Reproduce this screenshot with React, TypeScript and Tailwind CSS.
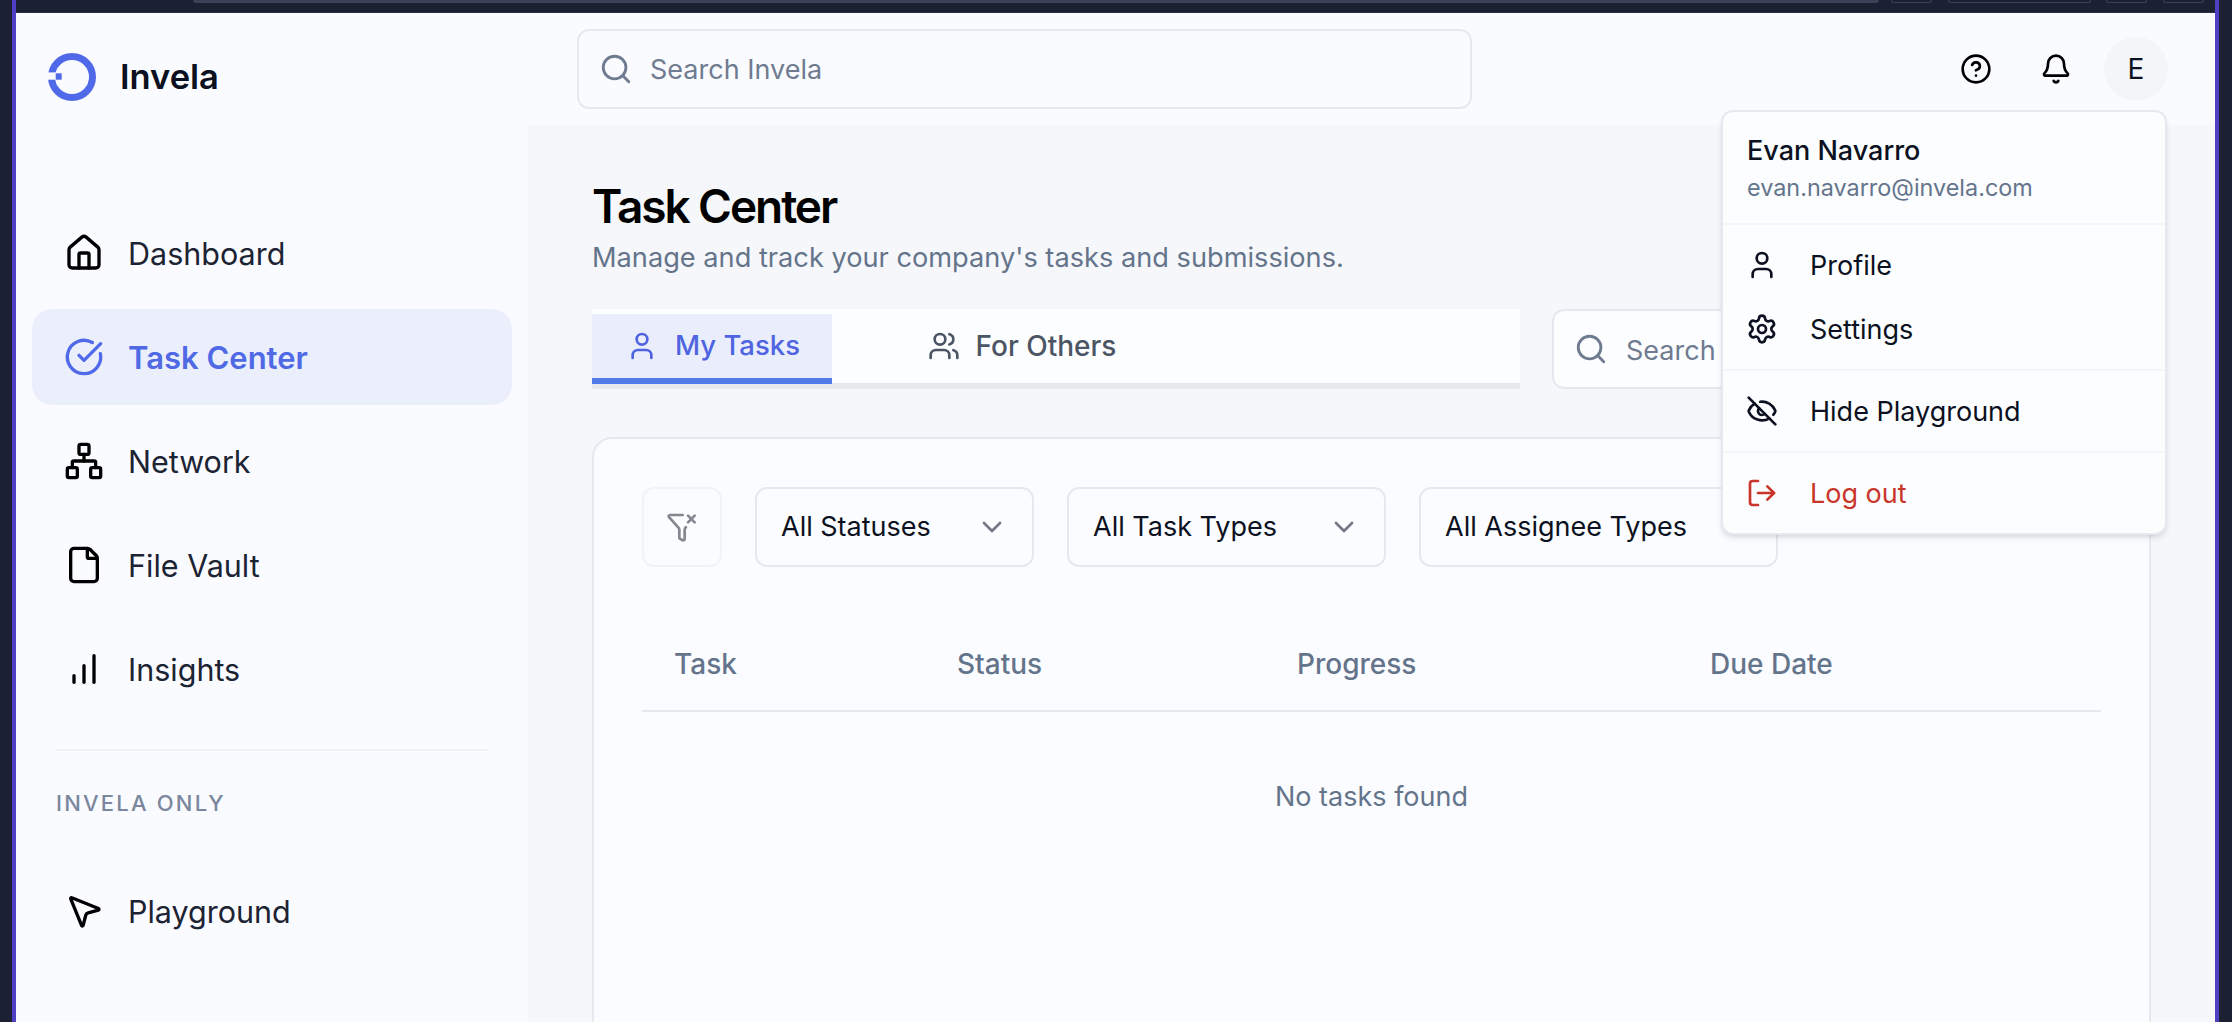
import { Home, CircleCheckBig, Network, File, MousePointer2, Search, CircleHelp, Bell, User, Users, Settings, EyeOff, LogOut, FilterX, ChevronDown } from "lucide-react";

function Logo() {
  return (
    <svg width="48" height="48" viewBox="0 0 48 48" fill="none">
      <circle cx="24" cy="24" r="20.5" stroke="#5069e8" strokeWidth="7" />
      <rect x="0" y="19.4" width="8" height="7.3" fill="#fafbff" />
      <rect x="7.7" y="20.3" width="6" height="6.4" fill="#5069e8" />
    </svg>
  );
}

function BarsIcon({ size = 40, className = "" }: { size?: number; strokeWidth?: number; className?: string }) {
  return (
    <svg width={size} height={size} viewBox="0 0 24 24" fill="none" stroke="currentColor" strokeWidth="2" strokeLinecap="round" strokeLinejoin="round" className={className}>
      <path d="M12 20V10" />
      <path d="M18 20V4" />
      <path d="M6 20v-4" />
    </svg>
  );
}

const nav = [
  { label: "Dashboard", Icon: Home },
  { label: "Task Center", Icon: CircleCheckBig, active: true },
  { label: "Network", Icon: Network },
  { label: "File Vault", Icon: File },
  { label: "Insights", Icon: BarsIcon },
];

function NavItem({ label, Icon, active }: { label: string; Icon: any; active?: boolean }) {
  return (
    <div className={`flex h-[96px] items-center gap-[24px] rounded-[20px] pl-[32px] ${active ? "bg-[#ebeffc] text-[31px] font-semibold text-[#5069e4]" : "text-[30.5px] text-[#1c2333]"}`}>
      <Icon size={40} strokeWidth={2} className={active ? "text-[#5069e8]" : "text-black"} />
      <span className="pt-[2px]">{label}</span>
    </div>
  );
}

function Select({ label, width, icon = true }: { label: string; width: string; icon?: boolean }) {
  return (
    <div className={`flex h-[80px] items-center justify-between rounded-[12px] border-2 border-[#e5e9ef] pl-[24px] pr-[24px] text-[27px] text-[#0b1120] ${width}`}>
      <span className="pt-[1px]">{label}</span>
      {icon && <ChevronDown size={32} strokeWidth={2} className="text-[#737a86]" />}
    </div>
  );
}

function MenuRow({ label, Icon, red }: { label: string; Icon: any; red?: boolean }) {
  return (
    <div className={`flex h-[64px] items-center gap-[32px] pl-[23px] text-[27px] ${red ? "text-[#c9352b]" : "text-[#0b1120]"}`}>
      <Icon size={32} strokeWidth={2} className={red ? "text-[#c9352b]" : "text-[#0b1120]"} />
      <span className="pt-[2px]">{label}</span>
    </div>
  );
}

const chrome = "h-[3px] rounded-b-[6px] border-x border-b border-[#3b4157]";

export default function App() {
  return (
    <div className="relative flex h-[1022px] w-[2232px] overflow-hidden bg-[#1b2133] font-['Inter',sans-serif]">
      <div className="w-[12px] shrink-0 bg-[#1b2133]" />
      <div className="w-[4px] shrink-0 bg-[#4f3fc4]" />
      <div className="flex min-w-0 flex-1 flex-col">
        <div className="flex h-[13px] shrink-0 items-start border-b border-[#2a3040] bg-[#1b2133] pl-[177px]">
          <div className="h-[3px] w-[1686px] rounded-b-[6px] bg-[#3b4157]" />
          <div className={`ml-[12px] w-[41px] ${chrome}`} />
          <div className={`ml-[16px] w-[143px] ${chrome}`} />
          <div className={`ml-[15px] w-[41px] ${chrome}`} />
          <div className={`ml-[16px] w-[41px] ${chrome}`} />
        </div>
        <div className="flex min-h-0 flex-1 bg-[#fafbff]">
          <aside className="flex w-[512px] shrink-0 flex-col">
            <div className="flex h-[112px] shrink-0 items-center gap-[24px] pl-[32px] pt-[16px]">
              <Logo />
              <span className="text-[34.5px] font-semibold text-[#0b1120]">Invela</span>
            </div>
            <div className="mt-[80px] flex flex-col gap-[8px] px-[16px]">
              {nav.map((n) => (
                <NavItem key={n.label} {...n} />
              ))}
            </div>
            <div className="mx-[40px] mt-[32px] h-[2px] bg-[#f0f2f6]" />
            <div className="ml-[40px] mt-[37px] text-[22px] leading-[30px] font-medium tracking-[0.1em] text-[#7a879d]">INVELA ONLY</div>
            <div className="mt-[45px] px-[16px]">
              <NavItem label="Playground" Icon={MousePointer2} />
            </div>
          </aside>
          <div className="flex min-w-0 flex-1 flex-col">
            <header className="flex h-[112px] shrink-0 items-center pl-[49px] pr-[47px]">
              <div className="flex h-[80px] w-[895px] items-center gap-[17px] rounded-[12px] border-2 border-[#e5e9ef] pl-[20px] text-[27px] text-[#6f7b8f]">
                <Search size={34} strokeWidth={2} className="text-[#6f7b8f]" />
                <span className="pt-[3px]">Search Invela</span>
              </div>
              <div className="ml-auto flex items-center">
                <CircleHelp size={32} strokeWidth={2} className="text-black" />
                <Bell size={32} strokeWidth={2} className="ml-[48px] text-black" />
                <div className="ml-[32px] flex h-[64px] w-[64px] items-center justify-center rounded-full bg-[#f3f5f8] text-[28px] text-[#0b1120]">E</div>
              </div>
            </header>
            <main className="min-h-0 flex-1 bg-[#f6f7fa] px-[64px] pt-[53px]">
              <h1 className="text-[46px] leading-[56px] font-semibold tracking-[-0.045em] text-black">Task Center</h1>
              <p className="mt-[4px] text-[27.2px] leading-[40px] text-[#64748b]">Manage and track your company's tasks and submissions.</p>
              <div className="mt-[31px] flex gap-[32px]">
                <div className="flex h-[80px] w-[928px] shrink-0 flex-col bg-[#fcfdff]">
                  <div className="flex min-h-0 flex-1 border-b-[6px] border-[#e7e8ec]">
                    <div className="mt-[5px] mb-[-1px] flex w-[240px] items-center gap-[17px] border-b-[6px] border-[#4f7ae8] bg-[#eaedfc] pl-[34px] text-[27.5px] font-medium text-[#4f64e0]">
                      <User size={32} strokeWidth={2} className="text-[#4f64e0]" />
                      <span>My Tasks</span>
                    </div>
                    <div className="flex w-[380px] items-center justify-center gap-[16px] text-[28px] font-medium text-[#4b5563]">
                      <Users size={32} strokeWidth={2} className="text-[#4b5563]" />
                      <span>For Others</span>
                    </div>
                  </div>
                </div>
                <div className="flex h-[80px] flex-1 items-center gap-[18px] rounded-[12px] border-2 border-[#e5e9ef] bg-[#fcfdff] pl-[20px] text-[27px] text-[#6f7b8f]">
                  <Search size={34} strokeWidth={2} className="text-[#6f7b8f]" />
                  <span className="pt-[4px]">Search</span>
                </div>
              </div>
              <section className="mt-[48px] h-[700px] rounded-[20px] border-2 border-[#e5e9ef] bg-[#fbfcff] px-[48px] pt-[48px]">
                <div className="flex gap-[33px]">
                  <div className="flex h-[80px] w-[80px] items-center justify-center rounded-[12px] border-2 border-[#f1f3f7]">
                    <FilterX size={32} strokeWidth={2} className="text-[#83878f]" />
                  </div>
                  <Select label="All Statuses" width="w-[279px]" />
                  <Select label="All Task Types" width="w-[319px]" />
                  <Select label="All Assignee Types" width="w-[359px]" icon={false} />
                </div>
                <div className="mt-[49px] grid h-[96px] grid-cols-[283px_340px_413px_1fr] items-center border-b-2 border-[#e5e9ef] pl-[32px] pt-[1px] text-[28px] font-medium text-[#64748b]">
                  <span>Task</span>
                  <span>Status</span>
                  <span>Progress</span>
                  <span>Due Date</span>
                </div>
                <div className="flex h-[170px] items-center justify-center text-[27px] text-[#64748b]">No tasks found</div>
              </section>
            </main>
          </div>
        </div>
      </div>
      <div className="w-[4px] shrink-0 bg-[#4f3fc4]" />
      <div className="w-[13px] shrink-0 bg-[#1b2133]" />

      <div className="absolute left-[1721px] top-[110px] w-[446px] rounded-[12px] border-2 border-[#e5e9ef] bg-[#fcfdff] shadow-md">
        <div className="flex h-[111px] flex-col justify-center pl-[24px]">
          <div className="pt-[2px] text-[27px] font-medium leading-[38px] text-[#0b1120]">Evan Navarro</div>
          <div className="pt-[1px] text-[23.4px] leading-[34px] text-[#64748b]">evan.navarro@invela.com</div>
        </div>
        <div className="h-[2px] bg-[#f3f5f8]" />
        <div className="py-[8px]">
          <MenuRow label="Profile" Icon={User} />
          <MenuRow label="Settings" Icon={Settings} />
        </div>
        <div className="h-[2px] bg-[#f3f5f8]" />
        <div className="py-[8px]">
          <MenuRow label="Hide Playground" Icon={EyeOff} />
        </div>
        <div className="h-[2px] bg-[#f3f5f8]" />
        <div className="py-[8px]">
          <MenuRow label="Log out" Icon={LogOut} red />
        </div>
      </div>
    </div>
  );
}
